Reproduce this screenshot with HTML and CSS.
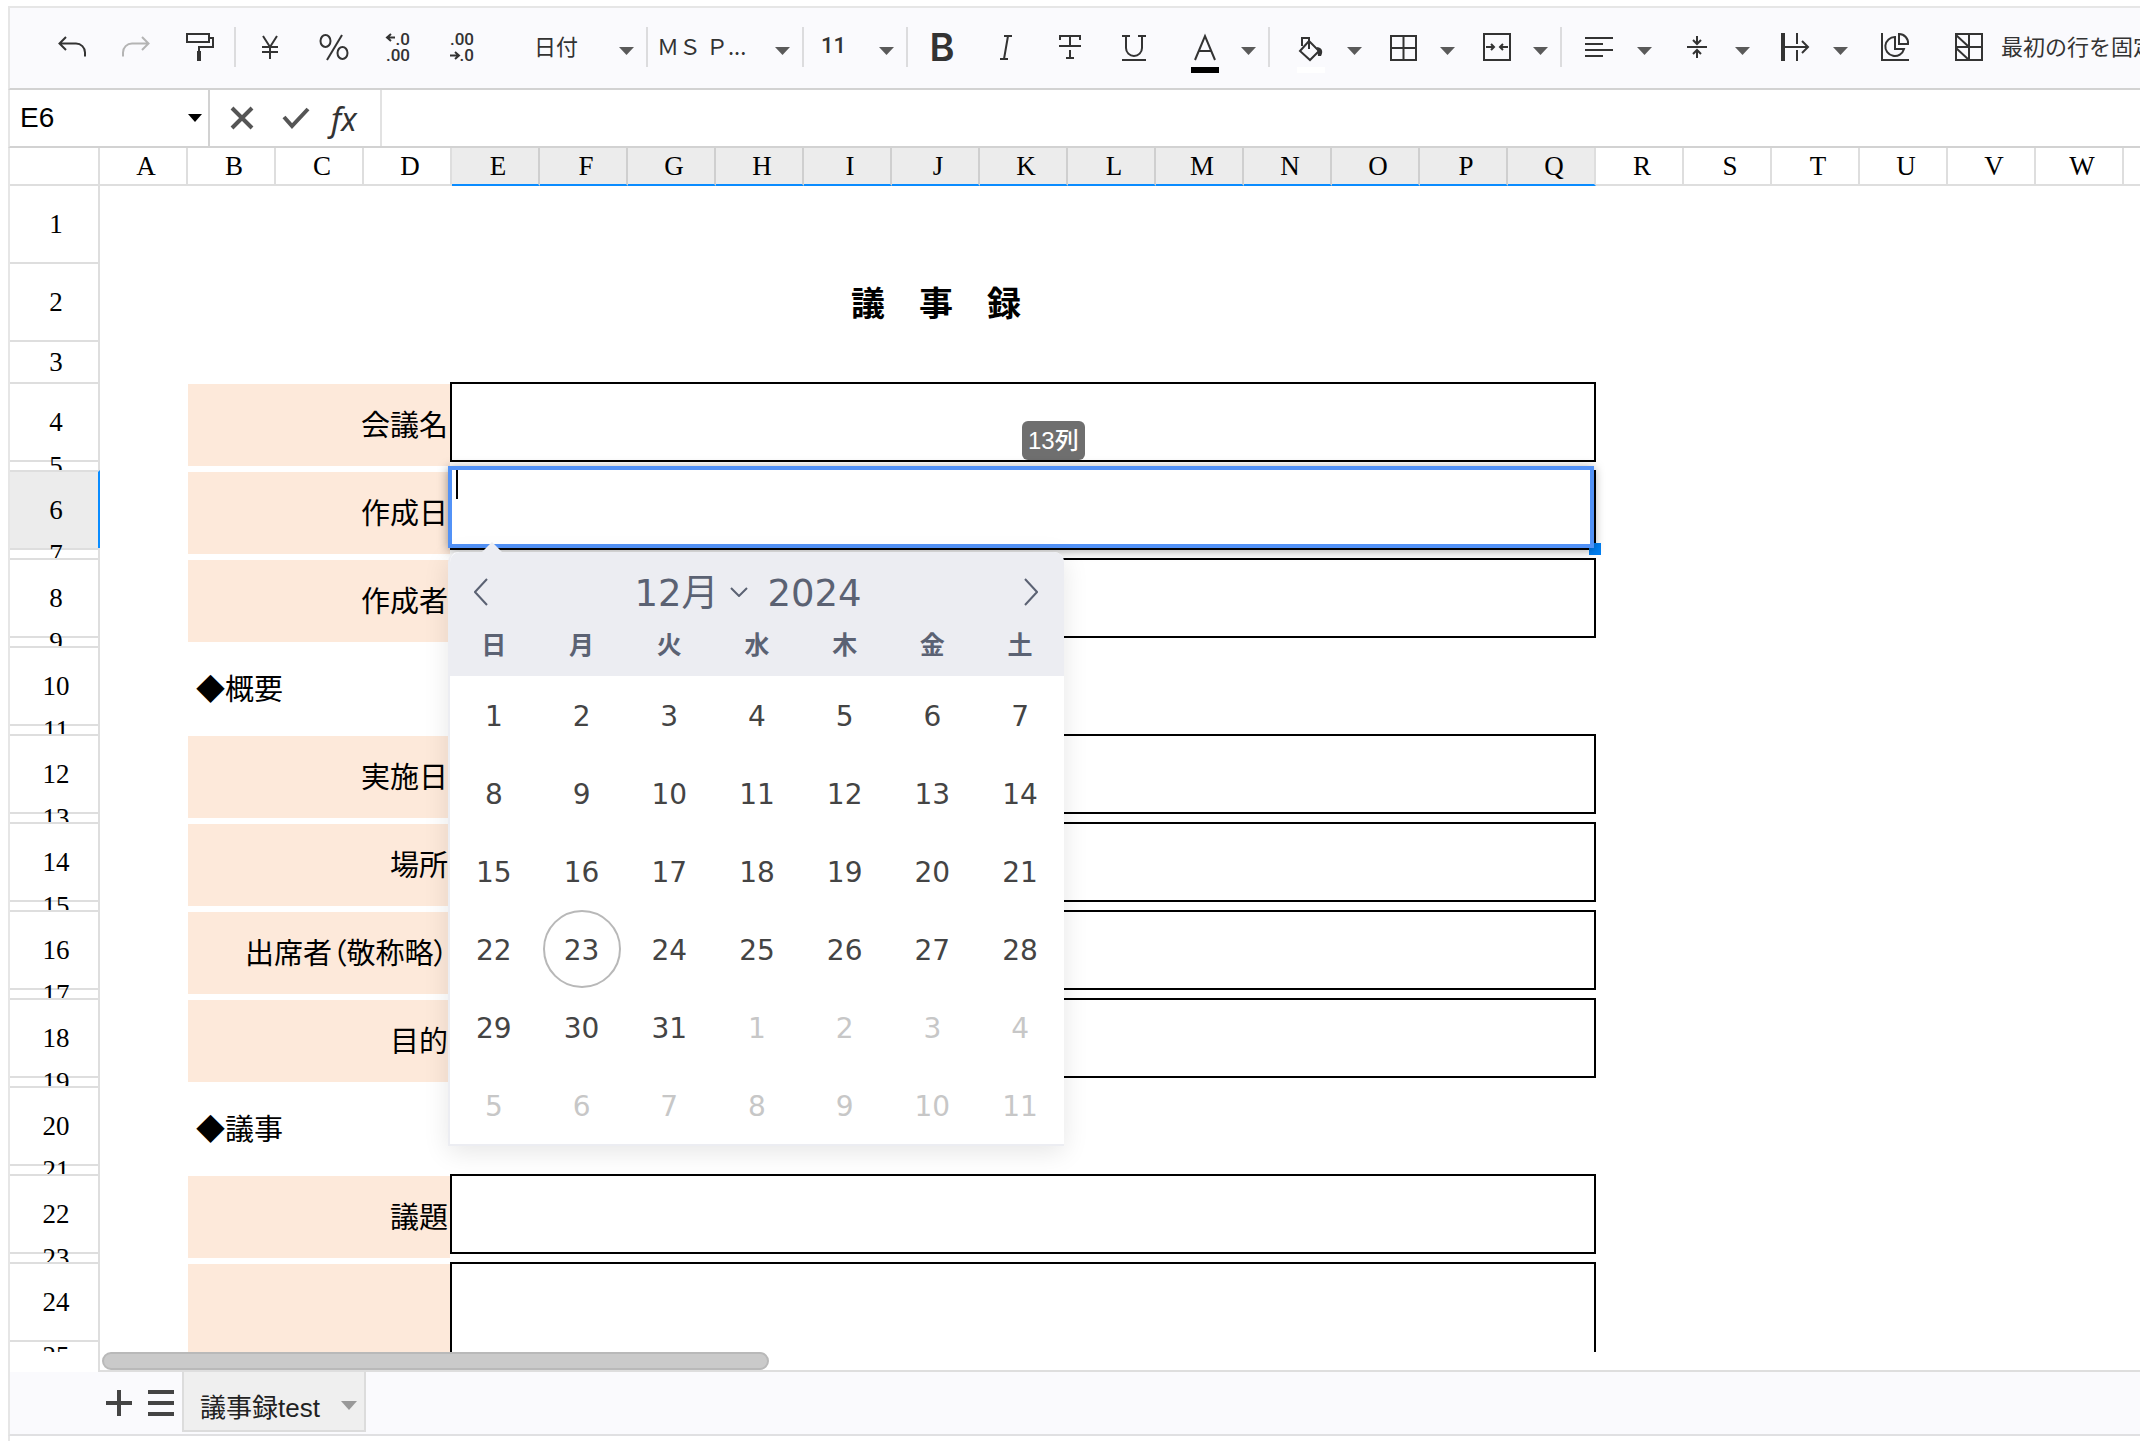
FILE: index.html
```html
<!DOCTYPE html>
<html lang="ja">
<head>
<meta charset="utf-8">
<title>議事録test</title>
<link rel="stylesheet" href="styles.css">
</head>
<body>
<svg class="defs" aria-hidden="true">
  <symbol id="caret" viewBox="0 0 15 28"><path d="M0 14h15l-7.500 8z" fill="#5a5a5a"/></symbol>
</svg>
<div class="app">
  <div class="toolbar" role="toolbar" aria-label="書式">
    <button class="tool" aria-label="元に戻す"><svg class="icon" viewBox="0 0 28 28"><path d="M8 4L1.500 10.500 8 17M2 10.500h16a9 9 0 0 1 9 9v4" class="ln"/></svg></button>
    <button class="tool dim" aria-label="やり直し"><svg class="icon" viewBox="0 0 28 28"><path d="M20 4l6.500 6.500L20 17M26 10.500H10a9 9 0 0 0-9 9v4" class="ln"/></svg></button>
    <button class="tool" aria-label="書式のコピー"><svg class="icon" viewBox="0 0 28 28"><path d="M1 1h22v8H1zM23 5h4v9H13v5" class="ln"/><path d="M11 18h4v10h-4z" class="fl"/></svg></button>
    <span class="sep"></span>
    <button class="tool" aria-label="通貨"><svg class="icon" viewBox="0 0 28 28"><path d="M7 3l7 11 7-11M14 14v12M6 14h16M6 19h16" class="ln"/></svg></button>
    <button class="tool" aria-label="パーセント"><svg class="icon" viewBox="0 0 28 28"><ellipse cx="5.500" cy="8" rx="5" ry="6" class="ln"/><ellipse cx="22.500" cy="20" rx="5" ry="6" class="ln"/><path d="M22 2L7 27" class="ln"/></svg></button>
    <button class="tool" aria-label="小数点以下の桁数を減らす"><svg class="icon" viewBox="0 0 28 28"><path d="M7 1L3 4.500 7 8M3 4.500h8" class="ln"/><text x="26" y="12" class="num">.0</text><text x="26" y="28" class="num">.00</text></svg></button>
    <button class="tool" aria-label="小数点以下の桁数を増やす"><svg class="icon" viewBox="0 0 28 28"><path d="M7 19l4 3.500L7 26M11 22.500H2" class="ln"/><text x="26" y="12" class="num">.00</text><text x="26" y="28" class="num">.0</text></svg></button>
    <button class="pick format"><span>日付</span><svg class="arrow"><use href="#caret"/></svg></button>
    <span class="sep"></span>
    <button class="pick font"><span>ＭＳ Ｐ...</span><svg class="arrow"><use href="#caret"/></svg></button>
    <span class="sep"></span>
    <button class="pick size"><span>11</span><svg class="arrow"><use href="#caret"/></svg></button>
    <span class="sep"></span>
    <button class="tool bold" aria-label="太字">B</button>
    <button class="tool" aria-label="斜体"><svg class="icon" viewBox="0 0 28 28"><path d="M12 3h8M8 26h8M16 3l-4 23" class="ln"/></svg></button>
    <button class="tool" aria-label="取り消し線"><svg class="icon" viewBox="0 0 28 28"><path d="M4 7V3h20v4M14 3v10M14 17v8M10 25h8M3 13h22" class="ln"/></svg></button>
    <button class="tool" aria-label="下線"><svg class="icon" viewBox="0 0 28 28"><path d="M2 3h8M18 3h8M6 3v12a8 8 0 0 0 16 0V3M2 27h24" class="ln"/></svg></button>
    <button class="pick color" aria-label="文字の色"><svg class="icon" viewBox="0 0 28 28"><path d="M4 27L14 3l10 24M8 18h12" class="ln"/><path d="M0 34h28v6H0z" fill="#000"/></svg><svg class="arrow"><use href="#caret"/></svg></button>
    <span class="sep"></span>
    <button class="pick color" aria-label="塗りつぶしの色"><svg class="icon" viewBox="0 0 28 28"><path d="M12 8l10 10-9 9-10-9zM5 13V5h7v11" class="ln"/><path d="M20 14c6 1 6 5 4 9h-3z" class="fl"/><path d="M0 34h28v6H0z" fill="#fff"/></svg><svg class="arrow"><use href="#caret"/></svg></button>
    <button class="pick cell" aria-label="罫線"><svg class="icon" viewBox="0 0 28 28"><path d="M1 3h25v24H1zM13.500 3v24M1 15h25" class="ln"/></svg><svg class="arrow"><use href="#caret"/></svg></button>
    <button class="pick cell" aria-label="セルの結合"><svg class="icon" viewBox="0 0 28 28"><path d="M1 1h26v26H1zM3 14h8M8 11l3 3-3 3M25 14h-8M20 11l-3 3 3 3" class="ln"/></svg><svg class="arrow"><use href="#caret"/></svg></button>
    <span class="sep"></span>
    <button class="pick align" aria-label="横位置"><svg class="icon" viewBox="0 0 28 28"><path d="M0 5h28M0 11h18M0 17h28M0 23h18" class="ln"/></svg><svg class="arrow"><use href="#caret"/></svg></button>
    <button class="pick align" aria-label="縦位置"><svg class="icon" viewBox="0 0 28 28"><path d="M4 14h20M14 3v8M10 7l4 4 4-4M14 25v-7M10 21l4-4 4 4" class="ln"/></svg><svg class="arrow"><use href="#caret"/></svg></button>
    <button class="pick align" aria-label="折り返し"><svg class="icon" viewBox="0 0 28 28"><path d="M0 0h4v28H0z" class="fl"/><path d="M4 14h22M21 8l6 6-6 6M16 0v11M16 17v11" class="ln"/></svg><svg class="arrow"><use href="#caret"/></svg></button>
    <button class="tool chart" aria-label="グラフ"><svg class="icon" viewBox="0 0 28 28"><path d="M1 0v27h27M14 4a9.500 9.500 0 1 0 9 12h-9zM18 1v10h9a9 9 0 0 0-9-10z" class="ln"/></svg></button>
    <button class="freeze"><svg class="icon" viewBox="0 0 28 28"><path d="M1 1h26v26H1zM14 1v26M1 14h26M1 2l13 12M1 15l13 12" class="ln"/></svg><span>最初の行を固定</span></button>
  </div>

  <div class="formula">
    <div class="namebox"><input type="text" value="E6" aria-label="名前ボックス"><svg width="14" height="8" viewBox="0 0 14 8"><path d="M0 0h14L7 8z"/></svg></div>
    <div class="actions">
      <button aria-label="キャンセル"><svg width="24" height="24" viewBox="0 0 24 24"><path d="M2 2l20 20M22 2L2 22"/></svg></button>
      <button aria-label="入力"><svg width="28" height="24" viewBox="0 0 28 24"><path d="M2 11l8 9L26 3"/></svg></button>
      <button class="fx" aria-label="関数">fx</button>
    </div>
    <input class="entry" type="text" aria-label="数式バー">
  </div>

  <div class="sheet">
    <table class="grid">
      <thead>
        <tr><th class="corner"></th><th>A</th><th>B</th><th>C</th><th class="end">D</th><th class="on">E</th><th class="on">F</th><th class="on">G</th><th class="on">H</th><th class="on">I</th><th class="on">J</th><th class="on">K</th><th class="on">L</th><th class="on">M</th><th class="on">N</th><th class="on">O</th><th class="on">P</th><th class="on last">Q</th><th>R</th><th>S</th><th>T</th><th>U</th><th>V</th><th>W</th><th></th></tr>
      </thead>
      <tbody>
        <tr class="first"><th>1</th></tr>
        <tr><th>2</th><td class="gap"></td><td class="title">議　事　録</td></tr>
        <tr class="mid"><th>3</th></tr>
        <tr><th>4</th><td class="gap"></td><td class="label"><div>会議名</div></td><td class="field"><div></div><span class="tip">13列</span></td></tr>
        <tr class="thin"><th>5</th></tr>
        <tr><th class="on">6</th><td class="gap"></td><td class="label"><div>作成日</div></td><td class="field"><div></div>
          <div class="editor"><span class="cursor"></span></div>
          <span class="handle"></span>
          <div class="calendar">
            <div class="months">
              <button aria-label="前の月"><svg width="14" height="28" viewBox="0 0 14 28"><path d="M13 1L1 14l12 13"/></svg></button>
              <div class="current">
                <label class="month"><select aria-label="月"><option>12月</option></select><svg width="18" height="10" viewBox="0 0 18 10"><path d="M1 1l8 8 8-8"/></svg></label>
                <input type="text" value="2024" aria-label="年">
              </div>
              <button aria-label="次の月"><svg width="14" height="28" viewBox="0 0 14 28"><path d="M1 1l12 13L1 27"/></svg></button>
            </div>
            <table class="days">
              <thead><tr><th>日</th><th>月</th><th>火</th><th>水</th><th>木</th><th>金</th><th>土</th></tr></thead>
              <tbody>
                <tr><td>1</td><td>2</td><td>3</td><td>4</td><td>5</td><td>6</td><td>7</td></tr>
                <tr><td>8</td><td>9</td><td>10</td><td>11</td><td>12</td><td>13</td><td>14</td></tr>
                <tr><td>15</td><td>16</td><td>17</td><td>18</td><td>19</td><td>20</td><td>21</td></tr>
                <tr><td>22</td><td class="now"><span class="today">23</span></td><td>24</td><td>25</td><td>26</td><td>27</td><td>28</td></tr>
                <tr><td>29</td><td>30</td><td>31</td><td class="next">1</td><td class="next">2</td><td class="next">3</td><td class="next">4</td></tr>
                <tr><td class="next">5</td><td class="next">6</td><td class="next">7</td><td class="next">8</td><td class="next">9</td><td class="next">10</td><td class="next">11</td></tr>
              </tbody>
            </table>
          </div>
        </td></tr>
        <tr class="thin"><th>7</th></tr>
        <tr><th>8</th><td class="gap"></td><td class="label"><div>作成者</div></td><td class="field"><div></div></td></tr>
        <tr class="thin"><th>9</th></tr>
        <tr><th>10</th><td class="gap"></td><td class="heading">◆概要</td></tr>
        <tr class="thin"><th>11</th></tr>
        <tr><th>12</th><td class="gap"></td><td class="label"><div>実施日</div></td><td class="field"><div></div></td></tr>
        <tr class="thin"><th>13</th></tr>
        <tr><th>14</th><td class="gap"></td><td class="label"><div>場所</div></td><td class="field"><div></div></td></tr>
        <tr class="thin"><th>15</th></tr>
        <tr><th>16</th><td class="gap"></td><td class="label"><div>出席者（敬称略）</div></td><td class="field"><div></div></td></tr>
        <tr class="thin"><th>17</th></tr>
        <tr><th>18</th><td class="gap"></td><td class="label"><div>目的</div></td><td class="field"><div></div></td></tr>
        <tr class="thin"><th>19</th></tr>
        <tr><th>20</th><td class="gap"></td><td class="heading">◆議事</td></tr>
        <tr class="thin"><th>21</th></tr>
        <tr><th>22</th><td class="gap"></td><td class="label"><div>議題</div></td><td class="field"><div></div></td></tr>
        <tr class="thin"><th>23</th></tr>
        <tr class="open"><th>24</th><td class="gap"></td><td class="label"><div></div></td><td class="field"><div></div></td></tr>
        <tr class="short"><th>25</th></tr>
      </tbody>
    </table>
  </div>
  <div class="hscroll"><div class="track"><div class="thumb"></div></div></div>

  <div class="tabs">
    <button class="add" aria-label="シートを追加"><svg width="26" height="26" viewBox="0 0 26 26"><path d="M13 0v26M0 13h26"/></svg></button>
    <button class="list" aria-label="シート一覧"><svg width="26" height="26" viewBox="0 0 26 26"><path d="M0 2h26M0 13h26M0 24h26"/></svg></button>
    <button class="tab">議事録test<svg width="16" height="9" viewBox="0 0 16 9"><path d="M0 0h16L8 9z"/></svg></button>
  </div>
  <div class="foot"></div>
</div>
</body>
</html>
```
FILE: styles.css
```css
:root {
  --col: 88px;
  --line: #dedede;
  --ui: "Noto Sans CJK JP", "Noto Sans", sans-serif;
}

* { box-sizing: border-box; }

body {
  margin: 0;
  background: #fff;
  color: #000;
  font-family: var(--ui);
}

button, input, select {
  margin: 0;
  padding: 0;
  border: 0;
  background: none;
  color: inherit;
  font: inherit;
}

button { flex: none; }

.defs { position: absolute; width: 0; height: 0; }

.app {
  display: flex;
  flex-direction: column;
  height: 100vh;
  padding: 6px 0 0 8px;
  overflow: hidden;
}

.toolbar, .formula, .sheet, .hscroll, .tabs, .foot { border-left: 2px solid #e6e6e6; }

/* toolbar */
.toolbar {
  display: flex;
  flex: none;
  align-items: center;
  height: 84px;
  padding: 0 0 2px 30px;
  border-top: 2px solid #e6e6e6;
  border-bottom: 2px solid #d2d2d2;
  background: #fafafd;
  color: #333;
  font-size: 22px;
  white-space: nowrap;
  overflow: hidden;
}

.icon { display: block; flex: none; width: 28px; height: 28px; overflow: visible; }
.ln { fill: none; stroke: #333; stroke-width: 2; }
.fl { fill: #333; }
.dim .ln { stroke: #b4b4b4; }
.num { font: 500 17px Roboto, sans-serif; text-anchor: end; fill: #333; }
.arrow { display: block; flex: none; width: 15px; height: 28px; }

.tool {
  display: flex;
  align-items: center;
  justify-content: center;
  width: 64px;
  height: 64px;
}

.sep { flex: none; width: 2px; height: 40px; margin: 0 2px; background: #dcdcde; }

.pick { display: flex; align-items: center; justify-content: space-between; height: 64px; padding-right: 10px; line-height: 28px; }
.pick span, .freeze span { padding-bottom: 4px; }
.format { width: 150px; padding-left: 40px; }
.font { width: 150px; padding-left: 7px; }
.size { width: 98px; padding-left: 15px; font: 500 22px Roboto, sans-serif; }
.color { width: 100px; padding-left: 25px; }
.cell { width: 93px; padding-left: 18px; }
.align { width: 98px; padding-left: 21px; }
.bold { font: 600 38px Inter, sans-serif; }
.chart { width: 74px; }
.freeze { display: flex; align-items: center; gap: 18px; height: 64px; padding-left: 23px; }

/* formula bar */
.formula {
  display: flex;
  flex: none;
  height: 58px;
  border-bottom: 2px solid #d2d2d2;
}
.namebox {
  display: flex;
  align-items: center;
  width: 200px;
  padding: 0 6px 0 10px;
  border-right: 2px solid #d2d2d2;
}
.namebox input { flex: 1; min-width: 0; font: 28px "Liberation Sans", sans-serif; }
.actions {
  display: flex;
  align-items: center;
  gap: 28px;
  width: 172px;
  padding-left: 20px;
  border-right: 2px solid #e2e2e2;
}
.actions svg { display: block; }
.actions path { fill: none; stroke: #555; stroke-width: 4; }
.fx { margin-left: -7px; font: italic 32px "Noto Sans", sans-serif; color: #333; }
.entry { flex: 1; min-width: 0; }

/* sheet */
.sheet { flex: 1; min-height: 0; overflow: hidden; }
.grid, .grid > thead, .grid > tbody { display: flex; flex-direction: column; }
.grid > * > tr { display: flex; flex: none; }
.grid > * > tr > th { font: 27px "Liberation Serif", serif; }

.grid > thead th {
  flex: none;
  width: var(--col);
  height: 38px;
  padding: 0 0 0 6px;
  border-right: 2px solid var(--line);
  border-bottom: 2px solid var(--line);
  line-height: 36px;
  text-align: center;
}
.grid > thead .corner { width: 90px; }
.grid > thead .on { background: #ececec; border-right-color: #cfcfcf; border-bottom-color: #0a8cff; }
.grid > thead .last { border-right-color: var(--line); }

.grid > tbody > tr { height: 78px; }
.grid > tbody > tr.first { height: 76px; }
.grid > tbody > tr.thin { height: 10px; }
.grid > tbody > tr.mid { height: 42px; }
.grid > tbody > tr.short { height: 30px; }
.grid > tbody > tr > td { flex: none; padding: 0; }

.grid > tbody > tr > th {
  display: flex;
  align-items: center;
  justify-content: center;
  flex: none;
  width: 90px;
  padding: 0 0 0 4px;
  border-top: 2px solid var(--line);
  border-right: 2px solid var(--line);
  background: #fff;
  line-height: 30px;
}
.grid > tbody > tr.first > th { border-top: 0; }
.grid > tbody > tr > th.on { background: #ececec; border-right-color: #0a8cff; }

.gap { width: var(--col); }
.title {
  display: flex;
  align-items: center;
  justify-content: center;
  width: calc(17 * var(--col));
  font-size: 34px;
  font-weight: 700;
}
.label { width: calc(3 * var(--col) - 2px); }
.label div, .grid .heading {
  display: flex;
  align-items: center;
  height: 82px;
  margin-top: 2px;
  padding-bottom: 4px;
  font-size: 29px;
}
.label div {
  justify-content: flex-end;
  padding-right: 2px;
  background: #fde9da;
  font-feature-settings: "palt";
}
.grid .heading { padding-left: 8px; }
.field { position: relative; width: calc(13 * var(--col) + 2px); }
.field > div:first-child { height: 80px; border: 2px solid #000; }
.open .label div, .open .field > div:first-child { height: 200px; }

.tip {
  position: absolute;
  left: 50%;
  top: 39px;
  z-index: 2;
  margin-left: -1px;
  padding: 0 6px;
  border-radius: 6px;
  background: #6f6f6f;
  color: #fff;
  font: 500 24px/39px "Liberation Sans", "Noto Sans CJK JP", sans-serif;
}

/* open cell editor */
.editor {
  position: absolute;
  left: -2px;
  right: 2px;
  top: -4px;
  z-index: 3;
  height: 82px;
  padding-left: 4px;
  border: 4px solid #5292f7;
  background: #fff;
  box-shadow: 0 2px 10px rgba(0, 0, 0, .4);
}
.cursor { display: block; width: 2px; height: 29px; background: #000; }
.handle {
  position: absolute;
  right: -5px;
  top: 73px;
  z-index: 2;
  width: 12px;
  height: 12px;
  background: #0080f5;
}

/* date picker */
.calendar {
  position: absolute;
  left: -2px;
  top: 82px;
  z-index: 4;
  width: 616px;
  border: solid #ecedf2;
  border-width: 0 0 2px 2px;
  border-radius: 10px 10px 0 0;
  background: #fff;
  box-shadow: 0 6px 26px rgba(0, 0, 0, .1);
  font-family: "DejaVu Sans", "Noto Sans CJK JP", sans-serif;
}
.calendar::before {
  content: "";
  position: absolute;
  left: 32px;
  top: -10px;
  border: 10px solid transparent;
  border-top: 0;
  border-bottom-color: #ecedf2;
}
.months {
  display: flex;
  align-items: center;
  justify-content: space-between;
  height: 68px;
  padding: 12px 26px 0 24px;
  border-radius: 10px 10px 0 0;
  background: #ecedf2;
  color: #5b6273;
  font-size: 37px;
}
.months svg { display: block; }
.months path { fill: none; stroke: #5b6273; stroke-width: 2; }
.current { display: flex; align-items: center; gap: 20px; }
.month { display: flex; align-items: center; gap: 10px; }
.month select, .current input { height: 50px; padding-top: 2px; }
.month select { appearance: none; }
.current input { width: 110px; }

.days { width: 614px; table-layout: fixed; border-collapse: collapse; }
.days th {
  height: 56px;
  padding: 0 0 4px;
  background: #ecedf2;
  color: #5b6273;
  font-size: 25px;
  font-weight: 700;
  line-height: 38px;
}
.days td { height: 78px; padding: 3px 0 0; color: #444; font-size: 28px; line-height: 34px; text-align: center; }
.days .next { color: #c7c7c7; }
.days .now { padding: 0; }
.today {
  display: block;
  width: 78px;
  height: 78px;
  margin: 0 auto;
  border: 2px solid #b8b8b8;
  border-radius: 50%;
  line-height: 77px;
}

/* scroll bar and sheet tabs */
.hscroll { flex: none; height: 20px; padding-left: 88px; }
.track { height: 20px; padding-left: 2px; border-left: 2px solid var(--line); border-bottom: 2px solid var(--line); }
.thumb { width: 33%; max-width: 667px; height: 18px; border: 2px solid #b9b9b9; border-radius: 9px; background: #cacaca; }

.tabs {
  display: flex;
  align-items: flex-start;
  flex: none;
  height: 64px;
  padding-left: 96px;
  border-bottom: 2px solid #e0e0e2;
  background: #fafafd;
}
.tabs svg { display: block; }
.add, .list { height: 62px; margin-right: 16px; }
.list { margin-right: 8px; }
.add path, .list path { stroke: #444; stroke-width: 4; }
.tab {
  display: flex;
  align-items: center;
  gap: 21px;
  height: 60px;
  padding: 8px 7px 0 16px;
  border: 2px solid #dcdcdc;
  border-top: 0;
  background: #efefef;
  color: #222;
  font: 26px "Liberation Sans", "Noto Sans CJK JP", sans-serif;
}
.tab path { fill: #999; }
.foot { flex: none; height: 5px; }
```
